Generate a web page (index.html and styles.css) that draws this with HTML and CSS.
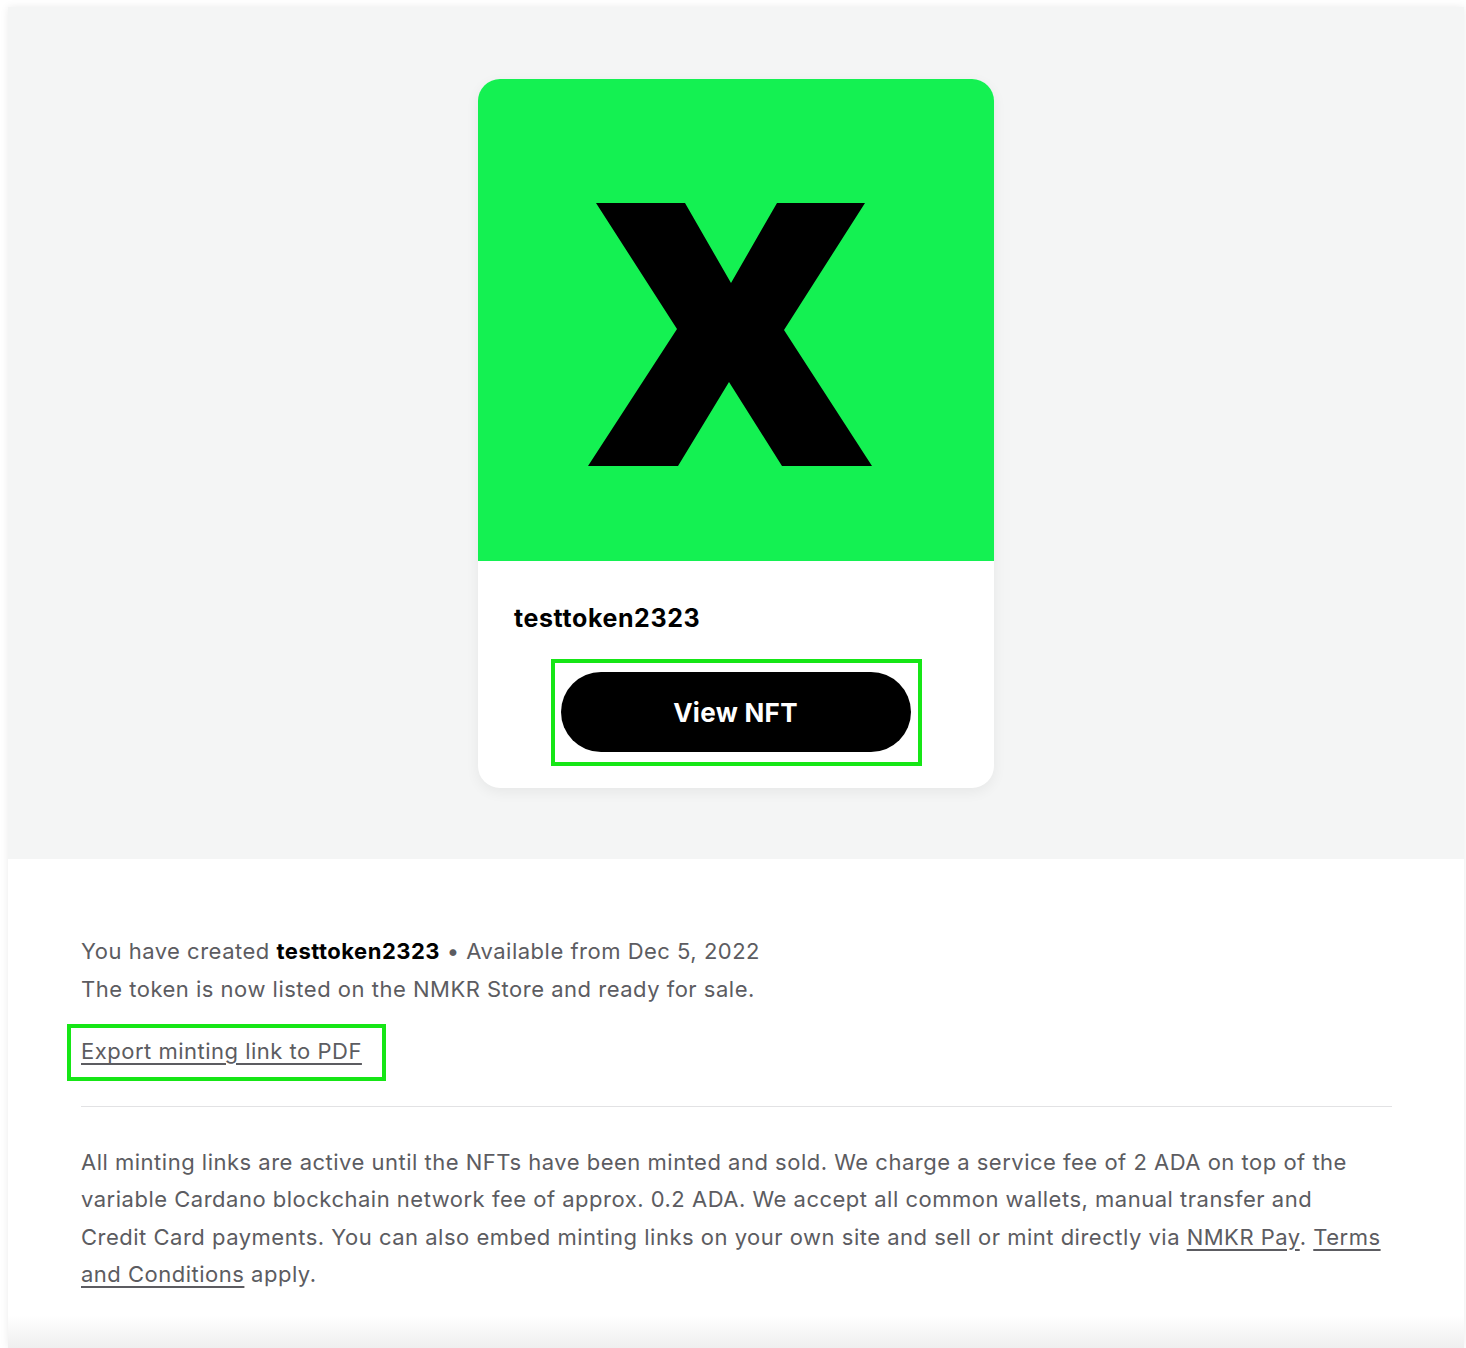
FILE: index.html
```html
<!DOCTYPE html>
<html lang="en">
<head>
    <meta charset="UTF-8">
    <meta name="viewport" content="width=device-width, initial-scale=1.0">
    <title>NFT created</title>
    <link rel="stylesheet" href="styles.css">
</head>
<body>
    <div class="modal">
        <div class="preview">
            <div class="card">
                <div class="card-image">
                    <svg viewBox="0 0 516 482" width="516" height="482">
                        <polygon fill="#000" points="118,124 207,124 253,204 299,124 387,124 306,251 394,387 304,387 251,303 200,387 110,387 199,250"/>
                    </svg>
                </div>
                <div class="card-body">
                    <h3 class="card-title">testtoken2323</h3>
                    <div class="highlight button-wrap">
                        <button class="view-btn">View NFT</button>
                    </div>
                </div>
            </div>
        </div>
        <div class="details">
            <p class="summary">
                You have created <strong>testtoken2323</strong> &bull; Available from Dec 5, 2022<br>
                The token is now listed on the NMKR Store and ready for sale.
            </p>
            <div class="highlight export-wrap">
                <a href="#" class="export-link">Export minting link to PDF</a>
            </div>
            <hr class="divider">
            <p class="info">
                All minting links are active until the NFTs have been minted and sold. We charge a service fee of 2 ADA on top of the<br>
                variable Cardano blockchain network fee of approx. 0.2 ADA. We accept all common wallets, manual transfer and<br>
                Credit Card payments. You can also embed minting links on your own site and sell or mint directly via <a href="#">NMKR Pay</a>. <a href="#">Terms<br>and Conditions</a> apply.
            </p>
            <div class="fade"></div>
        </div>
    </div>
</body>
</html>
```

FILE: styles.css
```css
body {
    font-family: Inter, "Open Sans", sans-serif;
    background-color: #fff;
    margin: 0;
    padding: 7px 2px 0 8px;
    height: 1348px;
    box-sizing: border-box;
    overflow: hidden;
}
.modal {
    background-color: #fff;
    box-shadow: 0 0 8px rgba(0, 0, 0, 0.08);
    height: 1341px;
    display: flex;
    flex-direction: column;
}
.preview {
    background-color: #f4f5f5;
    padding: 72px 0 71px;
    display: flex;
    justify-content: center;
}
.card {
    width: 516px;
    background-color: #fff;
    border-radius: 22px;
    overflow: hidden;
    box-shadow: 0 4px 14px rgba(0, 0, 0, 0.06);
}
.card-image {
    background-color: #14f152;
    height: 482px;
}
.card-image svg {
    display: block;
}
.card-body {
    padding: 41px 36px 22px;
    display: flex;
    flex-direction: column;
}
.card-title {
    margin: 0 0 25px;
    font-size: 25px;
    font-weight: 700;
    line-height: 32px;
    letter-spacing: 0.6px;
    color: #000;
}
.highlight {
    border: 4px solid #16e616;
}
.button-wrap {
    align-self: center;
    padding: 9px 7px 10px 6px;
}
.view-btn {
    display: block;
    width: 350px;
    height: 80px;
    background-color: #000;
    color: #fff;
    border: none;
    border-radius: 40px;
    font-family: inherit;
    font-size: 26px;
    font-weight: 700;
    letter-spacing: 0.3px;
    cursor: pointer;
}
.details {
    flex: 1;
    padding: 74px 72px 0 73px;
    display: flex;
    flex-direction: column;
    color: #5c5c61;
    font-size: 22px;
    line-height: 37.5px;
    letter-spacing: 0.5px;
}
.summary {
    margin: 0;
}
.summary strong {
    color: #000;
    font-weight: 700;
}
.export-wrap {
    align-self: flex-start;
    margin: 16px 0 0 -14px;
    padding: 5px 20px 6px 10px;
}
.export-link,
.info a {
    color: #5c5c61;
    text-decoration: underline;
    text-underline-offset: 4px;
    text-decoration-thickness: 1.5px;
}
.divider {
    border: none;
    border-top: 1px solid #e2e2e4;
    margin: 25px 0 37px;
}
.info {
    margin: 0;
}
.fade {
    flex: 1;
    margin: 0 -72px 0 -73px;
    background: linear-gradient(to bottom, #fff 40%, #efefef 100%);
}
```
